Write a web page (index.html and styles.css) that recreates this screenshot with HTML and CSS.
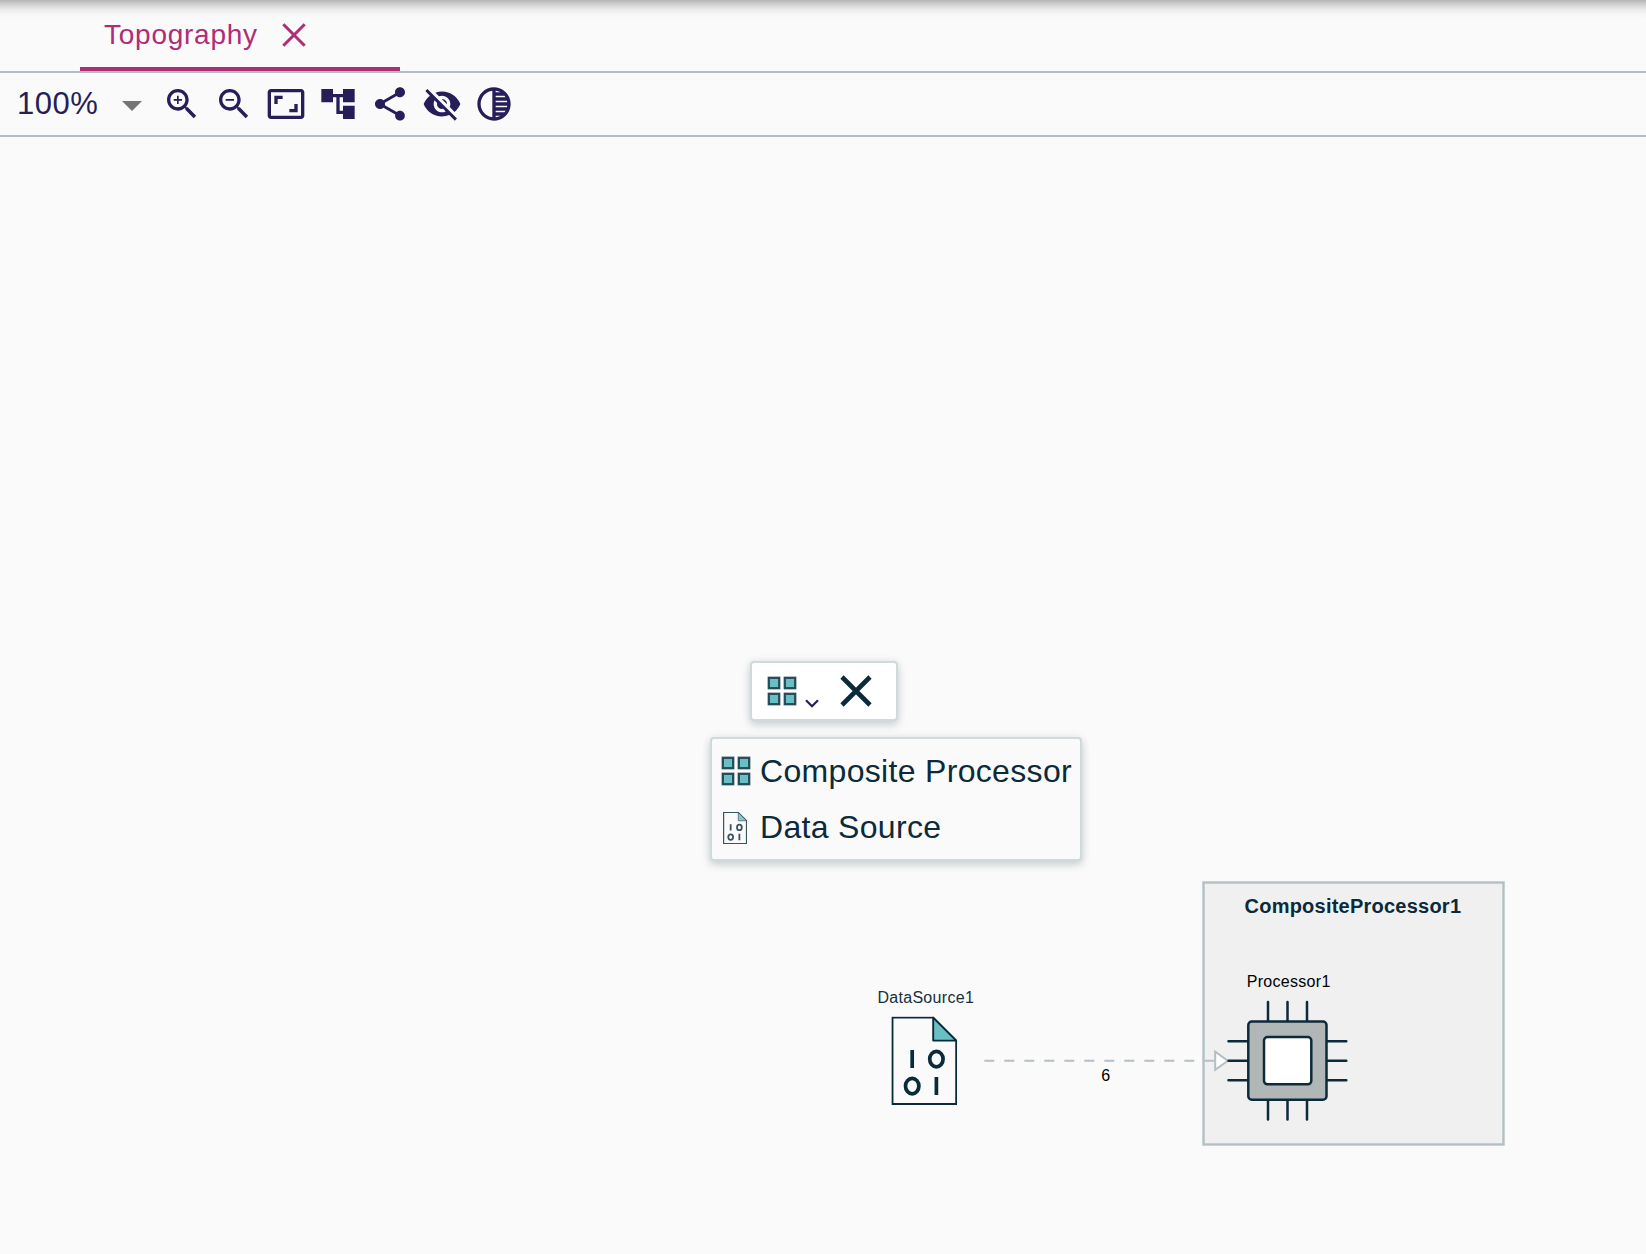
FILE: index.html
```html
<!DOCTYPE html>
<html lang="en">
<head>
<meta charset="utf-8">
<title>Topography</title>
<link rel="stylesheet" href="styles.css">
</head>
<body>
<svg class="defs" width="0" height="0" aria-hidden="true">
  <symbol id="grid" viewBox="0 0 30 30">
    <g class="tile">
      <rect x="1.8" y="1.8" width="10.4" height="10.4"/><rect x="17.8" y="1.8" width="10.4" height="10.4"/>
      <rect x="1.8" y="17.8" width="10.4" height="10.4"/><rect x="17.8" y="17.8" width="10.4" height="10.4"/>
    </g>
  </symbol>
  <symbol id="file" viewBox="0 0 66 89">
    <path class="page" d="M1.3 1.3H42L65 24.3V87.7H1.3Z"/>
    <path class="fold" d="M42 1.3V24.3H65Z"/>
    <path class="bit" d="M21 33.8V51.8M45.2 60.8V78.8"/>
    <ellipse class="bit" cx="45.2" cy="42.8" rx="6.7" ry="7.7"/>
    <ellipse class="bit" cx="21" cy="69.8" rx="6.7" ry="7.7"/>
  </symbol>
</svg>
<div class="app">
  <header class="tabs">
    <div class="tab">
      <span>Topography</span>
      <svg class="close" viewBox="0 0 24 24"><path d="M1.3 1.3 22.7 22.7M22.7 1.3 1.3 22.7"/></svg>
    </div>
  </header>
  <div class="toolbar">
    <div class="zoom"><span>100%</span><svg class="caret" viewBox="0 0 20 10"><path d="M0 0H20L10 10Z"/></svg></div>
    <svg class="icon" viewBox="0 0 24 24"><path d="M15.5 14h-.79l-.28-.27C15.41 12.59 16 11.11 16 9.5 16 5.91 13.09 3 9.5 3S3 5.91 3 9.5 5.91 16 9.5 16c1.61 0 3.09-.59 4.23-1.57l.27.28v.79l5 4.99L20.49 19l-4.99-5zm-6 0C7.01 14 5 11.99 5 9.5S7.01 5 9.5 5 14 7.01 14 9.5 11.99 14 9.5 14zm2.5-4h-2v2H9v-2H7V9h2V7h1v2h2v1z"/></svg>
    <svg class="icon" viewBox="0 0 24 24"><path d="M15.5 14h-.79l-.28-.27C15.41 12.59 16 11.11 16 9.5 16 5.91 13.09 3 9.5 3S3 5.91 3 9.5 5.91 16 9.5 16c1.61 0 3.09-.59 4.23-1.57l.27.28v.79l5 4.99L20.49 19l-4.99-5zm-6 0C7.01 14 5 11.99 5 9.5S7.01 5 9.5 5 14 7.01 14 9.5 11.99 14 9.5 14zM7 9h5v1H7z"/></svg>
    <svg class="icon" viewBox="0 0 24 24"><path d="M19 12h-2v3h-3v2h5v-5zM7 9h3V7H5v5h2V9zm14-6H3c-1.1 0-2 .9-2 2v14c0 1.1.9 2 2 2h18c1.1 0 2-.9 2-2V5c0-1.1-.9-2-2-2zm0 16.01H3V4.99h18v14.02z"/></svg>
    <svg class="icon" viewBox="0 0 24 24"><path d="M22 11V3h-7v3H9V3H2v8h7V8h2v10h4v3h7v-8h-7v3h-2V8h2v3z"/></svg>
    <svg class="icon" viewBox="0 0 24 24"><path d="M18 16.08c-.76 0-1.44.3-1.96.77L8.91 12.7c.05-.23.09-.46.09-.7s-.04-.47-.09-.7l7.05-4.11c.54.5 1.25.81 2.04.81 1.66 0 3-1.34 3-3s-1.34-3-3-3-3 1.34-3 3c0 .24.04.47.09.7L8.04 9.81C7.5 9.31 6.79 9 6 9c-1.66 0-3 1.34-3 3s1.34 3 3 3c.79 0 1.5-.31 2.04-.81l7.12 4.16c-.05.21-.08.43-.08.65 0 1.61 1.31 2.92 2.92 2.92 1.61 0 2.92-1.31 2.92-2.92s-1.31-2.92-2.92-2.92z"/></svg>
    <svg class="icon" viewBox="0 0 24 24"><path d="M12 7c2.76 0 5 2.24 5 5 0 .65-.13 1.26-.36 1.83l2.92 2.92c1.51-1.26 2.7-2.89 3.43-4.75-1.73-4.39-6-7.5-11-7.5-1.4 0-2.74.25-3.98.7l2.16 2.16C10.74 7.13 11.35 7 12 7zM2 4.27l2.28 2.28.46.46C3.08 8.3 1.78 10.02 1 12c1.73 4.39 6 7.5 11 7.5 1.55 0 3.03-.3 4.38-.84l.42.42L19.73 22 21 20.73 3.27 3 2 4.27zM7.53 9.8l1.55 1.55c-.05.21-.08.43-.08.65 0 1.66 1.34 3 3 3 .22 0 .44-.03.65-.08l1.55 1.55c-.67.33-1.41.53-2.2.53-2.76 0-5-2.24-5-5 0-.79.2-1.53.53-2.2zm4.31-.78l3.15 3.15.02-.16c0-1.66-1.34-3-3-3l-.17.01z"/></svg>
    <svg class="icon" viewBox="0 0 24 24"><path d="M12 2C6.48 2 2 6.48 2 12s4.48 10 10 10 10-4.48 10-10S17.52 2 12 2zm-1 17.93c-3.94-.49-7-3.85-7-7.93s3.05-7.44 7-7.93v15.86zm2-15.86c1.03.13 2 .45 2.87.93H13v-.93zM13 7h5.24c.25.31.48.65.68 1H13V7zm0 3h6.74c.08.33.15.66.19 1H13v-1zm0 9.93V19h2.87c-.87.48-1.84.8-2.87.93zM18.24 17H13v-1h5.92c-.2.35-.43.69-.68 1zm1.5-3H13v-1h6.93c-.04.34-.11.67-.19 1z"/></svg>
  </div>
  <main class="canvas">
    <!-- The diagram's coordinates are those of the window; the canvas starts at y = 137. -->
    <svg class="diagram" viewBox="0 137 1646 1117">
      <rect class="group" x="1203.5" y="882.5" width="300" height="262"/>
      <text class="title" x="1244.5" y="913" textLength="216.5">CompositeProcessor1</text>

      <text class="label node-label" x="877.4" y="1003" textLength="96.4">DataSource1</text>
      <use href="#file" x="891.2" y="1016.3" width="66" height="89"/>

      <path class="edge dashed" d="M984.3 1060.7H1215"/>
      <path class="edge arrow" d="M1215.2 1051.6V1069.8L1227.8 1060.7Z"/>
      <text class="label" x="1101.3" y="1081">6</text>

      <text class="label" x="1246.7" y="987" textLength="83.6">Processor1</text>
      <path class="pins" d="M1268 1002V1021M1287.5 1002V1021M1307 1002V1021M1268 1100V1119.5M1287.5 1100V1119.5M1307 1100V1119.5M1228.5 1041.2H1248M1228.5 1060.8H1248M1228.5 1080.3H1248M1327 1041.2H1346.3M1327 1060.8H1346.3M1327 1080.3H1346.3"/>
      <rect class="chip" x="1248.3" y="1021.5" width="78.2" height="78.2" rx="3.5"/>
      <rect class="core" x="1264" y="1037" width="47.3" height="47.3" rx="3.5"/>
    </svg>

    <div class="palette">
      <svg class="grid-icon"><use href="#grid"/></svg>
      <svg class="chevron" viewBox="0 0 14 9"><path d="M1 1.2 7 7.2 13 1.2"/></svg>
      <svg class="dismiss" viewBox="0 0 32 32"><path d="M2 2 30 30M30 2 2 30"/></svg>
    </div>
    <div class="menu">
      <div class="item"><svg class="grid-icon"><use href="#grid"/></svg><span>Composite Processor</span></div>
      <div class="item"><svg class="file-icon"><use href="#file"/></svg><span>Data Source</span></div>
    </div>
  </main>
</div>
</body>
</html>
```
FILE: styles.css
```css
* { box-sizing: border-box; }
body {
  margin: 0;
  background: #fafafa;
  color: #0b2a3a;
  font-family: "Liberation Sans", Arial, sans-serif;
}
svg { display: block; flex: none; }
.defs { position: absolute; }
.app { display: flex; flex-direction: column; height: 1254px; overflow: hidden; }

.tabs {
  display: flex;
  height: 73px;
  padding-left: 80px;
  border-bottom: 2px solid #b3bfc5;
  background: linear-gradient(#b4b4b4 0, #cecece 4px, #e8e8e8 9px, #f6f6f6 14px, #fafafa 19px);
}
.tab {
  display: flex;
  align-items: center;
  gap: 24px;
  width: 320px;
  padding: 2px 0 0 24px;
  border-bottom: 4px solid #b02c76;
  color: #b02c76;
  font-size: 28px;
  letter-spacing: .75px;
}
.close { width: 24px; height: 24px; fill: none; stroke: #b02c76; stroke-width: 3; }

.toolbar {
  display: flex;
  align-items: center;
  gap: 12px;
  height: 64px;
  padding-left: 16px;
  border-bottom: 2px solid #b3bfc5;
  color: #261e58;
}
.zoom { display: flex; align-items: center; justify-content: space-between; width: 126px; margin-right: 8px; font-size: 31px; letter-spacing: .5px; }
.zoom span { padding-left: 1px; }
.caret { width: 20px; height: 10px; margin-top: 4px; fill: #757575; }
.icon { width: 40px; height: 40px; fill: #261e58; }

.canvas { position: relative; flex: 1; }
.diagram { width: 1646px; height: 1117px; }
.group { fill: #f0f0f0; stroke: #b3bfc2; stroke-width: 2.4; }
.title { fill: #0b2a3a; font-size: 20px; font-weight: bold; }
.label { fill: #000; font-size: 16px; }
.node-label { fill: #14303f; }
.edge { fill: none; stroke: #b3bfc2; stroke-width: 2; }
.dashed { stroke-dasharray: 10 10; }
.arrow { fill: #fff; }
.pins { stroke: #0b2a3a; stroke-width: 2.5; stroke-linecap: round; }
.chip { fill: #b1b7b7; stroke: #0b2a3a; stroke-width: 2.5; }
.core { fill: #fff; stroke: #0b2a3a; stroke-width: 2.5; }

.page { fill: #fafafa; stroke: #0b2a3a; stroke-width: 1.9; }
.fold { fill: #69bfc2; stroke: #0b2a3a; stroke-width: 1.9; stroke-linejoin: round; }
.bit { fill: none; stroke: #0b2a3a; stroke-width: 3.7; }
.file-icon { --outline: 3.4; }
.tile { fill: #69bfc2; stroke: #274b5a; stroke-width: 2.3; }

.palette, .menu {
  position: absolute;
  border: 2px solid #d0d9db;
  border-radius: 4px;
  box-shadow: 0 4px 8px rgba(38, 70, 80, .2), 0 0 8px rgba(38, 70, 80, .08);
}
.palette {
  left: 750px;
  top: 524px;
  display: flex;
  align-items: center;
  width: 148px;
  height: 60px;
  padding-left: 15px;
  background: #fff;
}
.grid-icon { width: 30px; height: 30px; }
.chevron { width: 14px; height: 9px; margin: 24px 0 0 8px; fill: none; stroke: #261e58; stroke-width: 2.2; }
.dismiss { width: 32px; height: 32px; margin-left: 21px; fill: none; stroke: #0b2a3a; stroke-width: 4.6; }
.menu {
  left: 710px;
  top: 600px;
  width: 372px;
  height: 124px;
  padding: 4px 0 4px 9px;
  background: #fafafa;
}
.item { display: flex; align-items: center; gap: 9px; height: 56px; font-size: 32px; letter-spacing: .32px; white-space: nowrap; }
.file-icon { width: 24px; height: 32px; margin: 2px 4px 0 2px; opacity: .8; }
.page { stroke-width: var(--outline, 1.9); }
.file-icon { --bit: 5; }
.bit { stroke-width: var(--bit, 3.7); }
```
